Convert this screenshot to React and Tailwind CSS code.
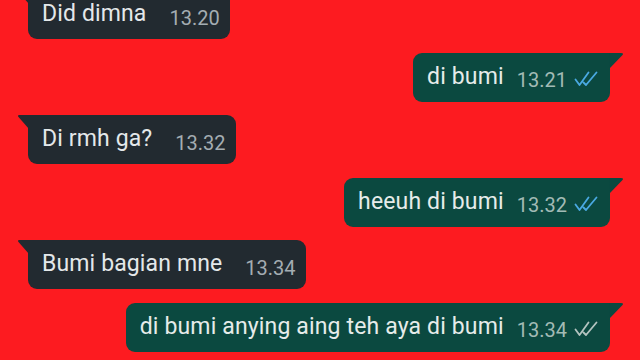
import React from 'react';

const messages = [
  { id: 1, text: 'Did dimna', time: '13.20', mine: false },
  { id: 2, text: 'di bumi', time: '13.21', mine: true, read: true },
  { id: 3, text: 'Di rmh ga?', time: '13.32', mine: false },
  { id: 4, text: 'heeuh di bumi', time: '13.32', mine: true, read: true },
  { id: 5, text: 'Bumi bagian mne', time: '13.34', mine: false },
  { id: 6, text: 'di bumi anying aing teh aya di bumi', time: '13.34', mine: true, read: false },
];

const DoubleCheck = ({ read }) => (
  <svg width="25" height="16" viewBox="0 0 25 16" fill="none" className="ml-[7px] mt-[4px]">
    <path
      d="M1.5 8.5 L5.5 14 L14.5 1.5 M9.5 11.5 L12 14 L22.5 1.5"
      stroke={read ? '#4aa9e2' : '#b4c4c0'}
      strokeWidth="1.8"
      strokeLinecap="round"
      strokeLinejoin="round"
    />
  </svg>
);

const Bubble = ({ msg }) => {
  if (msg.mine) {
    return (
      <div className="flex justify-end pr-[30px]">
        <div className="relative flex h-[49px] items-center rounded-[9px] rounded-tr-none bg-[#0b4940] pl-[14px] pr-[11px]">
          <svg className="absolute right-[-14px] top-0" width="15" height="15" viewBox="0 0 15 15">
            <path d="M0 0 L12 0 Q15 0 13.5 2 L1 15 Z" fill="#0b4940" />
          </svg>
          <span className="text-[23px] tracking-[0.15px] text-[#e6ecea]">{msg.text}</span>
          <span className="ml-[13px] mt-[6px] text-[20px] text-[#a2bbb5]">{msg.time}</span>
          <DoubleCheck read={msg.read} />
        </div>
      </div>
    );
  }
  return (
    <div className="flex justify-start pl-[28px]">
      <div className="relative flex h-[49px] items-center rounded-[9px] rounded-tl-none bg-[#222a30] pl-[14px] pr-[10px]">
        <svg className="absolute left-[-11px] top-0" width="12" height="14" viewBox="0 0 12 14">
          <path d="M12 0 L2.5 0 Q0 0 1.5 2 L12 14 Z" fill="#222a30" />
        </svg>
        <span className="text-[23px] tracking-[0.13px] text-[#e4e8ea]">{msg.text}</span>
        <span className="ml-[23px] mt-[6px] text-[20px] text-[#a4adb2]">{msg.time}</span>
      </div>
    </div>
  );
};

export default function App() {
  return (
    <div
      className="h-[360px] w-[640px] overflow-hidden bg-[#fd1b20]"
      style={{ fontFamily: 'Roboto, "Liberation Sans", sans-serif' }}
    >
      <div className="-mt-[10px] flex flex-col gap-[13.5px]">
        {messages.map((msg) => (
          <Bubble key={msg.id} msg={msg} />
        ))}
      </div>
    </div>
  );
}
